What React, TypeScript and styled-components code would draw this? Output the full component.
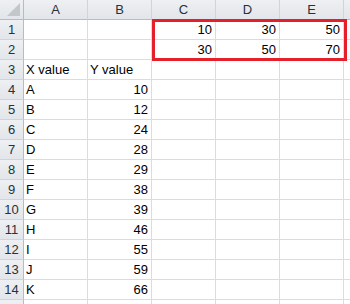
import React from "react";
import styled, { createGlobalStyle } from "styled-components";

const GlobalStyle = createGlobalStyle`
    html, body {
        margin: 0;
        padding: 0;
        background: #ffffff;
    }
    body {
        width: 350px;
        height: 304px;
        overflow: hidden;
    }
`;

const COLUMNS = ["A", "B", "C", "D", "E", "F"];

type CellValue = string | number | null;

// rows 1..15, columns A..F
const ROWS: CellValue[][] = [
    [null, null, 10, 30, 50, null],
    [null, null, 30, 50, 70, null],
    ["X value", "Y value", null, null, null, null],
    ["A", 10, null, null, null, null],
    ["B", 12, null, null, null, null],
    ["C", 24, null, null, null, null],
    ["D", 28, null, null, null, null],
    ["E", 29, null, null, null, null],
    ["F", 38, null, null, null, null],
    ["G", 39, null, null, null, null],
    ["H", 46, null, null, null, null],
    ["I", 55, null, null, null, null],
    ["J", 59, null, null, null, null],
    ["K", 66, null, null, null, null],
    [null, null, null, null, null, null],
];

const SheetWrap = styled.div`
    position: relative;
    width: 350px;
    height: 304px;
    overflow: hidden;
    font-family: "Liberation Sans", Arial, sans-serif;
    font-size: 13px;
`;

const Grid = styled.div`
    display: grid;
    grid-template-columns: 24px repeat(6, 64px);
    grid-auto-rows: 20px;
`;

const HeadBase = styled.div`
    box-sizing: border-box;
    background: linear-gradient(#eef0f3, #e2e5e9);
    border-right: 1px solid #c6cace;
    border-bottom: 1px solid #c6cace;
    color: #27313c;
    display: flex;
    align-items: center;
    justify-content: center;
    line-height: 19px;
`;

const Corner = styled(HeadBase)`
    position: relative;
    border-bottom-color: #b8bcc2;
    border-right-color: #b8bcc2;
`;

const CornerMark = styled.svg`
    position: absolute;
    right: 3px;
    bottom: 3px;
`;

const ColHead = styled(HeadBase)`
    border-bottom-color: #b8bcc2;
    border-right-color: #d0d3d8;
`;

const RowHead = styled(HeadBase)`
    border-right-color: #b8bcc2;
    border-bottom-color: #d0d3d8;
`;

const Cell = styled.div<{ $numeric: boolean }>`
    box-sizing: border-box;
    border-right: 1px solid #dadcdd;
    border-bottom: 1px solid #dadcdd;
    color: #000000;
    line-height: 19px;
    padding: 0 ${(p) => (p.$numeric ? "3px" : "0")} 0
        ${(p) => (p.$numeric ? "0" : "2px")};
    text-align: ${(p) => (p.$numeric ? "right" : "left")};
    white-space: nowrap;
    overflow: hidden;
`;

const Selection = styled.div`
    position: absolute;
    left: 152px;
    top: 19px;
    width: 195px;
    height: 42px;
    box-sizing: border-box;
    border: 3px solid #e5202b;
    pointer-events: none;
`;

const App = () => {
    return (
        <SheetWrap>
            <GlobalStyle />
            <Grid>
                <Corner>
                    <CornerMark width="13" height="13" viewBox="0 0 13 13">
                        <polygon points="13,0 13,13 0,13" fill="#c3c7cc" />
                    </CornerMark>
                </Corner>
                {COLUMNS.map((c) => (
                    <ColHead key={c}>{c}</ColHead>
                ))}
                {ROWS.map((row, r) => (
                    <React.Fragment key={r}>
                        <RowHead>{r + 1}</RowHead>
                        {row.map((v, c) => (
                            <Cell key={c} $numeric={typeof v === "number"}>
                                {v}
                            </Cell>
                        ))}
                    </React.Fragment>
                ))}
            </Grid>
            <Selection />
        </SheetWrap>
    );
};

export default App;
